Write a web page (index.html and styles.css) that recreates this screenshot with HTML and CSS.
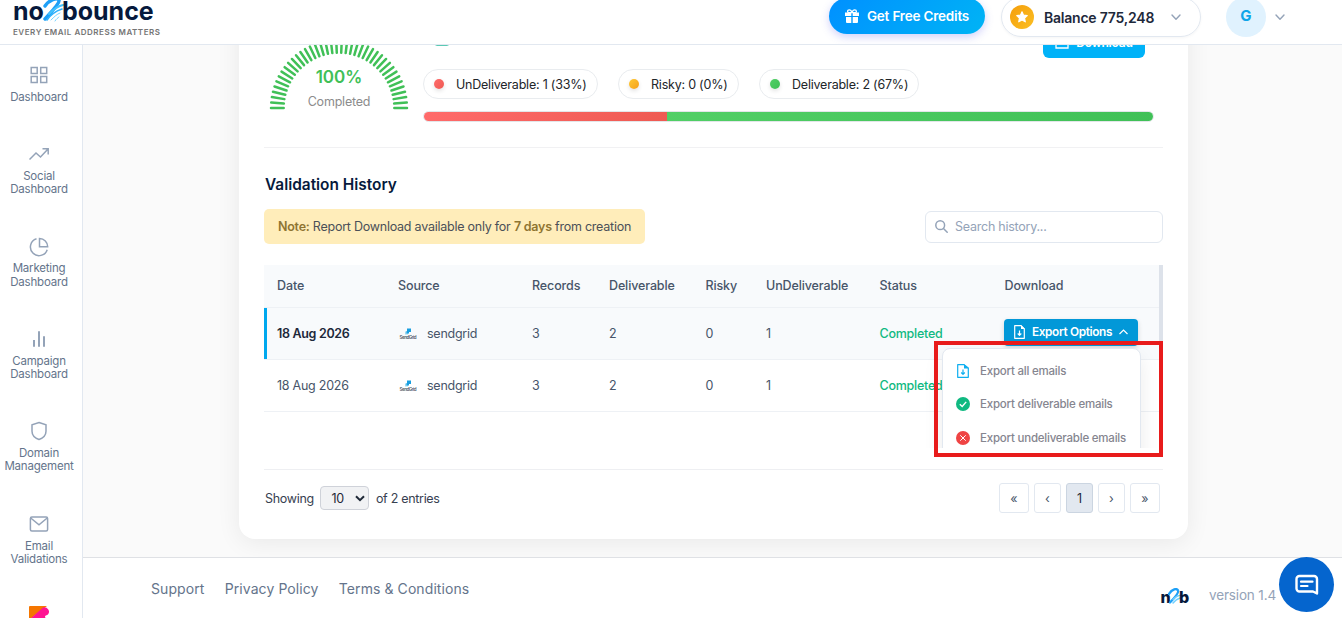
FILE: index.html
```html
<!DOCTYPE html>
<html lang="en">
<head>
    <meta charset="UTF-8">
    <meta name="viewport" content="width=device-width, initial-scale=1.0">
    <title>no2bounce - Validation History</title>
    <link rel="stylesheet" href="styles.css">
</head>
<body>

    <header class="topbar">
        <div class="topbar-inner">
            <div class="brand">
                <div class="logo">
                    <span>no</span>
                    <svg class="logo-two" width="24" height="26" viewBox="0 0 24 26" fill="none" stroke-linecap="round">
                        <path d="M4 9C8 3 16 0 18 3c1 3-6 10-14 19" stroke="#1ea0f7" stroke-width="3.4"/>
                        <path d="M8 17c4-4 8-8 14-9" stroke="#42c3ff" stroke-width="2"/>
                        <path d="M6 23c4-6 9-9 15-11" stroke="#2fb1fb" stroke-width="1.6"/>
                        <path d="M10 23c3-3 6-6 9-7M14 24c1-2 3-3 4-4" stroke="#7ad5ff" stroke-width="1"/>
                    </svg>
                    <span>bounce</span>
                </div>
                <div class="tagline">EVERY EMAIL ADDRESS MATTERS</div>
            </div>
            <div class="topbar-actions">
                <button class="credits-btn">
                    <svg width="14" height="14" viewBox="0 0 14 14" fill="#fff">
                        <path d="M0 3.6h6.3v3.4H0zM7.7 3.6H14v3.4H7.7zM1 8h5.3v6H2a1 1 0 0 1-1-1zM7.7 8H13v5a1 1 0 0 1-1 1H7.7z"/>
                        <path d="M7 3.6C6.4 1.6 5.4.8 4.3.8S2.6 1.6 2.6 2.4s.7 1.2 1.6 1.2zM7 3.6C7.6 1.6 8.6.8 9.7.8s1.7.8 1.7 1.6-.7 1.2-1.6 1.2z" fill="none" stroke="#fff" stroke-width="1.3"/>
                    </svg>
                    Get Free Credits
                </button>
                <div class="balance">
                    <span class="coin">
                        <svg width="14" height="14" viewBox="0 0 24 24" fill="#fff" stroke="#fff" stroke-width="2" stroke-linejoin="round"><path d="M12 3l2.7 5.8 6.3.8-4.6 4.4 1.2 6.3L12 17.2l-5.6 3.1 1.2-6.3L3 9.6l6.3-.8z"/></svg>
                    </span>
                    <span class="balance-text">Balance 775,248</span>
                    <svg width="10" height="7" viewBox="0 0 10 7" fill="none" stroke="#94a3b8" stroke-width="1.4" stroke-linecap="round" stroke-linejoin="round"><path d="M1 1l4 4.3L9 1"/></svg>
                </div>
                <div class="user">
                    <span class="avatar">G</span>
                    <svg width="10" height="7" viewBox="0 0 10 7" fill="none" stroke="#94a3b8" stroke-width="1.4" stroke-linecap="round" stroke-linejoin="round"><path d="M1 1l4 4.3L9 1"/></svg>
                </div>
            </div>
        </div>
    </header>

    <div class="layout">
        <nav class="sidebar">
            <a class="nav-item">
                <svg width="20" height="20" viewBox="0 0 20 20"><path d="M2.2 2.5h6v6h-6zM11.7 2.5h6v6h-6zM2.2 11.5h6v6h-6zM11.7 11.5h6v6h-6z"/></svg>
                <span>Dashboard</span>
            </a>
            <a class="nav-item">
                <svg width="20" height="20" viewBox="0 0 20 20"><path d="M.5 15.5l6.500-6.500 4.500 4 7.500-8M13.500 4.700h5.700v5.700"/></svg>
                <span>Social<br>Dashboard</span>
            </a>
            <a class="nav-item">
                <svg width="20" height="20" viewBox="0 0 20 20"><path d="M7.5 1.8A8.6 8.6 0 1 0 18.2 12.7M10.5 1.5v8.3h8.2a8.2 8.2 0 0 0-8.2-8.3z"/></svg>
                <span>Marketing<br>Dashboard</span>
            </a>
            <a class="nav-item">
                <svg width="20" height="20" viewBox="0 0 20 20"><path stroke-width="2" d="M5 11v6.8M10 2.2v15.6M15 7.2v10.6"/></svg>
                <span>Campaign<br>Dashboard</span>
            </a>
            <a class="nav-item">
                <svg width="20" height="20" viewBox="0 0 20 20"><path d="M10 1.5l7 2.3v6.400c0 4-3 6.800-7 8.300-4-1.500-7-4.300-7-8.300V3.800z"/></svg>
                <span>Domain<br>Management</span>
            </a>
            <a class="nav-item">
                <svg width="20" height="20" viewBox="0 0 20 20"><rect x="1.4" y="3" width="17.2" height="14" rx="1.5"/><path d="M1.7 4l8.3 6.8L18.200 4"/></svg>
                <span>Email<br>Validations</span>
            </a>
            <a class="nav-item">
                <svg class="filled" width="20" height="20" viewBox="0 0 20 20"><path fill="#f57600" d="M1 0h17L0 14V1a1 1 0 0 1 1-1z"/><path fill="#ff1493" d="M0 14L14 1.5a4.500 4.500 0 0 1 5 7L16 10l2 10H0z"/></svg>
            </a>
        </nav>

        <div class="main">
            <div class="content">
                <div class="card">

                    <section class="stats">
                        <div class="gauge">
                            <svg id="gauge" width="140" height="72" viewBox="0 0 140 72"></svg>
                            <div class="gauge-text">
                                <div class="gauge-value">100%</div>
                                <div class="gauge-label">Completed</div>
                            </div>
                        </div>
                        <div class="summary">
                            <div class="summary-top">
                                <svg width="14" height="14" viewBox="0 0 14 14" fill="none" stroke="#5cc9b4"><rect x=".5" y=".5" width="13" height="13" rx="1"/></svg>
                                <button class="download-btn">
                                    <svg width="14" height="14" viewBox="0 0 14 14" fill="none" stroke="#fff" stroke-width="1.3"><path d="M1 8v5h12V8M7 1v8M4 6l3 3 3-3"/></svg>
                                    Download
                                </button>
                            </div>
                            <div class="pills">
                                <span class="pill"><i class="dot red"></i>UnDeliverable: 1 (33%)</span>
                                <span class="pill"><i class="dot yellow"></i>Risky: 0 (0%)</span>
                                <span class="pill"><i class="dot green"></i>Deliverable: 2 (67%)</span>
                            </div>
                            <div class="bar">
                                <div class="bar-red" style="width: 33.33%"></div>
                                <div class="bar-green" style="width: 66.67%"></div>
                            </div>
                        </div>
                    </section>

                    <h2 class="title">Validation History</h2>

                    <div class="toolbar">
                        <div class="note"><b>Note:</b> Report Download available only for <b>7 days</b> from creation</div>
                        <div class="search">
                            <svg width="13" height="13" viewBox="0 0 13 13" fill="none" stroke="#94a3b8" stroke-width="1.5" stroke-linecap="round"><circle cx="5.2" cy="5.2" r="4.4"/><path d="M8.5 8.5l3.7 3.7"/></svg>
                            <span>Search history...</span>
                        </div>
                    </div>

                    <div class="table-wrap">
                        <table class="history">
                            <colgroup>
                                <col class="c-date"><col class="c-source"><col class="c-records"><col class="c-deliv">
                                <col class="c-risky"><col class="c-undeliv"><col class="c-status"><col class="c-download">
                            </colgroup>
                            <thead>
                                <tr>
                                    <th>Date</th><th>Source</th><th>Records</th><th>Deliverable</th>
                                    <th>Risky</th><th>UnDeliverable</th><th>Status</th><th>Download</th>
                                </tr>
                            </thead>
                            <tbody>
                                <tr class="active">
                                    <td>18 Aug 2026</td>
                                    <td>
                                        <div class="source">
                                            <svg width="20" height="14" viewBox="0 0 20 14"><path fill="#9dd9f3" d="M7 4.500h3V7.500H7z"/><path fill="#1a9fe0" d="M9 1.500h4v3.500h-2v1.500H8.500V4H9z"/><text x="1.5" y="12" textLength="17">SendGrid</text></svg>
                                            sendgrid
                                        </div>
                                    </td>
                                    <td>3</td><td>2</td><td>0</td><td>1</td>
                                    <td class="done">Completed</td>
                                    <td class="download-cell">
                                        <div class="export">
                                            <button class="export-btn">
                                                <svg width="11" height="14" viewBox="0 0 11 14" fill="none" stroke="#fff" stroke-width="1.2" stroke-linejoin="round"><path d="M.7.7H7L10.3 4v9.3H.7z"/><path fill="#fff" stroke="none" d="M7 0l4 4H7z"/><path d="M5.5 5.5v4.7M3.7 8.5l1.800 1.800 1.800-1.800"/></svg>
                                                Export Options
                                                <svg width="9" height="6" viewBox="0 0 9 6" fill="none" stroke="#fff" stroke-width="1.2"><path d="M.5 5l4-4 4 4"/></svg>
                                            </button>
                                            <div class="menu">
                                                <div class="menu-item">
                                                    <svg width="14" height="14" viewBox="0 0 14 14" fill="none" stroke="#0eaef0" stroke-width="1.2" stroke-linejoin="round"><path d="M1.7.7H8L12.3 4v9.3H1.7z"/><path fill="#0eaef0" stroke="none" d="M8 0l4.500 4.500H8z"/><path d="M7 5.5v4.7M5.2 8.5L7 10.300l1.800-1.800"/></svg>
                                                    Export all emails
                                                </div>
                                                <div class="menu-item">
                                                    <svg width="14" height="14" viewBox="0 0 14 14" fill="none"><circle cx="7" cy="7" r="7" fill="#10b981"/><path d="M3.8 7.2l2.4 2.3 4-4.6" stroke="#fff" stroke-width="1.4"/></svg>
                                                    Export deliverable emails
                                                </div>
                                                <div class="menu-item">
                                                    <svg width="14" height="14" viewBox="0 0 14 14" fill="none"><circle cx="7" cy="7" r="7" fill="#ef4444"/><path d="M4.3 4.3l5.4 5.4M9.7 4.3L4.3 9.7" stroke="#fff"/></svg>
                                                    Export undeliverable emails
                                                </div>
                                            </div>
                                        </div>
                                    </td>
                                </tr>
                                <tr>
                                    <td>18 Aug 2026</td>
                                    <td>
                                        <div class="source">
                                            <svg width="20" height="14" viewBox="0 0 20 14"><path fill="#9dd9f3" d="M7 4.500h3V7.500H7z"/><path fill="#1a9fe0" d="M9 1.500h4v3.500h-2v1.500H8.500V4H9z"/><text x="1.5" y="12" textLength="17">SendGrid</text></svg>
                                            sendgrid
                                        </div>
                                    </td>
                                    <td>3</td><td>2</td><td>0</td><td>1</td>
                                    <td class="done">Completed</td>
                                    <td></td>
                                </tr>
                            </tbody>
                        </table>
                        <div class="scrollbar"></div>
                    </div>

                    <div class="table-footer">
                        <div class="entries">
                            <span>Showing</span>
                            <span class="page-size">10
                                <svg width="10" height="7" viewBox="0 0 10 7" fill="none" stroke="#1f2937" stroke-width="2"><path d="M1 1.2l4 4 4-4"/></svg>
                            </span>
                            <span>of 2 entries</span>
                        </div>
                        <div class="pagination">
                            <button class="page wide">«</button>
                            <button class="page">‹</button>
                            <button class="page current">1</button>
                            <button class="page">›</button>
                            <button class="page wide">»</button>
                        </div>
                    </div>

                </div>
            </div>

            <footer class="footer">
                <div class="footer-links">
                    <a>Support</a>
                    <a>Privacy Policy</a>
                    <a>Terms &amp; Conditions</a>
                </div>
                <div class="footer-version">
                    <div class="mini-logo">
                        <span>n</span>
                        <svg width="13" height="17" viewBox="0 0 13 17" fill="none" stroke-linecap="round"><path d="M1 6C4 1 9 0 10 2.500c1 2-3 7-8 12" stroke="#1ea0f7" stroke-width="2.4"/><path d="M5 11.500c2-2 4-4 7-4M5 15c2-3 4-4 7-5" stroke="#6fd0ff" stroke-width="1.5"/></svg>
                        <span>b</span>
                    </div>
                    <span>version 1.4</span>
                </div>
            </footer>
        </div>
    </div>

    <div class="highlight-box"></div>

    <div class="chat">
        <svg width="24" height="22" viewBox="0 0 24 22" fill="none" stroke="#fff" stroke-linecap="round" stroke-linejoin="round"><path stroke-width="2.4" d="M4.5 2H19a3 3 0 0 1 3 3v14.500l-4-2H4.500a3 3 0 0 1-3-3V5a3 3 0 0 1 3-3z"/><path stroke-width="2.2" d="M6 7.7h11.500M6 12h6.500"/></svg>
    </div>

    <script>
        // Draw the gauge ticks over the half circle
        const gauge = document.getElementById('gauge');
        const ticks = 40;

        for (let i = 0; i < ticks; i++) {
            let angle = Math.PI - (Math.PI * i) / (ticks - 1);
            let line = document.createElementNS('http://www.w3.org/2000/svg', 'line');
            line.setAttribute('x1', 70 + 55.3 * Math.cos(angle));
            line.setAttribute('y1', 70 - 55.3 * Math.sin(angle));
            line.setAttribute('x2', 70 + 68 * Math.cos(angle));
            line.setAttribute('y2', 70 - 68 * Math.sin(angle));
            gauge.appendChild(line);
        }
    </script>

</body>
</html>
```
FILE: styles.css
```css
* {
    box-sizing: border-box;
}
body {
    margin: 0;
    height: 618px;
    display: flex;
    flex-direction: column;
    overflow: hidden;
    font-family: Inter, "Liberation Sans", sans-serif;
    font-size: 13px;
    color: #475569;
    background: #fff;
}
button {
    font-family: inherit;
    border: none;
    padding: 0;
}
svg {
    flex: none;
    display: block;
}

/* Top bar */
.topbar {
    flex: none;
    height: 45px;
    display: flex;
    align-items: flex-end;
    overflow: hidden;
    border-bottom: 1px solid #e2e8f0;
}
.topbar-inner {
    flex: 1;
    height: 54px;
    display: flex;
    align-items: center;
    justify-content: space-between;
    padding: 0 57px 0 13px;
}
.brand {
    padding-top: 2px;
}
.logo {
    display: flex;
    align-items: center;
    height: 26px;
    font-size: 25px;
    font-weight: 700;
    line-height: 26px;
    color: #06193c;
}
.logo-two {
    margin: -2px -3px 0 -3px;
}
.tagline {
    font-size: 8px;
    font-weight: 600;
    line-height: 11px;
    letter-spacing: 0.53px;
    margin-top: 3px;
    color: #757575;
    white-space: nowrap;
}
.topbar-actions {
    display: flex;
    align-items: center;
}
.credits-btn {
    display: flex;
    align-items: center;
    justify-content: center;
    gap: 8px;
    width: 156px;
    height: 36px;
    margin: 0 16px 2px 0;
    border-radius: 18px;
    background: linear-gradient(135deg, #0090ff, #00b4f5);
    box-shadow: 0 3px 8px rgba(99, 102, 241, 0.3);
    color: #fff;
    font-size: 13.5px;
    font-weight: 600;
    letter-spacing: -0.2px;
}
.balance {
    display: flex;
    align-items: center;
    width: 200px;
    height: 40px;
    padding-left: 8px;
    border: 1px solid #e2e8f0;
    border-radius: 20px;
    box-shadow: 0 1px 3px rgba(0, 0, 0, 0.04);
}
.coin {
    width: 24px;
    height: 24px;
    border-radius: 50%;
    background: linear-gradient(135deg, #f59e0b, #fbbf24);
    display: flex;
    align-items: center;
    justify-content: center;
}
.balance-text {
    width: 111px;
    margin: 0 16px 0 10px;
    font-size: 14px;
    font-weight: 600;
    letter-spacing: -0.22px;
    color: #1e293b;
    white-space: nowrap;
}
.user {
    display: flex;
    align-items: center;
    gap: 9px;
    margin-left: 25px;
}
.avatar {
    width: 40px;
    height: 40px;
    border-radius: 50%;
    background: #e0f2fe;
    color: #0ea5e9;
    font-size: 15px;
    font-weight: 700;
    line-height: 38px;
    text-align: center;
}

/* Sidebar */
.layout {
    flex: 1;
    min-height: 0;
    display: flex;
}
.sidebar {
    flex: none;
    width: 83px;
    padding: 20px 4px 0;
    display: flex;
    flex-direction: column;
    gap: 40.1px;
    overflow: hidden;
    border-right: 1px solid #e2e8f0;
}
.nav-item {
    flex: none;
    display: flex;
    flex-direction: column;
    align-items: center;
    gap: 5.9px;
    padding-right: 4px;
    font-size: 11.5px;
    line-height: 13.2px;
    letter-spacing: -0.2px;
    text-align: center;
    color: #64748b;
}
.nav-item svg {
    fill: none;
    stroke: #94a3b8;
    stroke-width: 1.5;
}
.nav-item .filled {
    stroke: none;
}

/* Main card */
.main {
    flex: 1;
    display: flex;
    flex-direction: column;
    min-width: 0;
}
.content {
    flex: 1;
    min-height: 0;
    display: flex;
    flex-direction: column;
    justify-content: flex-end;
    overflow: hidden;
    padding: 0 154px 18px 156px;
    background: #fafafa;
}
.card {
    flex: none;
    padding: 20px 25px 0;
    background: #fff;
    border-radius: 16px;
    box-shadow: 0 4px 24px rgba(0, 0, 0, 0.07);
}
.stats {
    display: flex;
    align-items: flex-end;
    gap: 14px;
    padding: 0 9px 25px 5px;
    border-bottom: 1px solid #f1f1f3;
}
.gauge {
    display: grid;
    width: 140px;
    margin-bottom: 12px;
}
.gauge svg, .gauge-text {
    grid-area: 1 / 1;
}
.gauge line {
    stroke: #40c057;
    stroke-width: 2.5;
    stroke-linecap: round;
}
.gauge-text {
    align-self: end;
    text-align: center;
}
.gauge-value {
    font-size: 17px;
    font-weight: 600;
    line-height: 20px;
    color: #40c057;
}
.gauge-label {
    font-size: 12.5px;
    line-height: 16px;
    letter-spacing: -0.2px;
    margin-top: 7px;
    color: #8c8c8c;
}
.summary {
    flex: 1;
}
.summary-top {
    display: flex;
    justify-content: space-between;
    align-items: flex-start;
    padding: 0 9px 0 12px;
}
.summary-top svg {
    margin-top: 6px;
}
.download-btn {
    display: flex;
    align-items: center;
    justify-content: center;
    gap: 7px;
    width: 102px;
    height: 32px;
    border-radius: 6px;
    background: #00b2f8;
    color: #fff;
    font-size: 12px;
    font-weight: 600;
    letter-spacing: -0.2px;
}
.download-btn svg {
    margin: 0;
}
.pills {
    display: flex;
    gap: 20.5px;
    margin: 11px 0 12px;
}
.pill {
    display: flex;
    align-items: center;
    height: 30px;
    padding: 0 10px 0 10px;
    border: 1px solid #e9ecef;
    border-radius: 15px;
    font-size: 12.5px;
    letter-spacing: -0.22px;
    color: #212529;
    white-space: nowrap;
}
.dot {
    width: 10px;
    height: 10px;
    margin-right: 12px;
    border-radius: 50%;
    box-shadow: 0 2px 4px rgba(0, 0, 0, 0.12);
}
.dot.red {
    background: linear-gradient(135deg, #ff6b6b, #ee5a52);
}
.dot.yellow {
    background: linear-gradient(135deg, #ffc933, #f59f1b);
}
.dot.green {
    background: linear-gradient(135deg, #51cf66, #40c057);
}
.bar {
    display: flex;
    height: 11px;
    border: 1px solid #e3e6e9;
    border-radius: 6px;
    overflow: hidden;
}
.bar-red {
    background: linear-gradient(135deg, #ff6b6b, #ee5a52);
}
.bar-green {
    background: linear-gradient(135deg, #51cf66, #40c057);
}

.title {
    margin: 26px 0 13px 1px;
    font-size: 15.4px;
    font-weight: 600;
    line-height: 22px;
    color: #06193c;
}
.toolbar {
    display: flex;
    align-items: center;
    justify-content: space-between;
    height: 35px;
    margin-bottom: 21px;
}
.note {
    width: 381px;
    padding-left: 14px;
    border-radius: 5px;
    background: #ffedba;
    font-size: 12.5px;
    line-height: 35px;
    letter-spacing: -0.24px;
    color: #4b5058;
    white-space: nowrap;
}
.note b {
    font-weight: 600;
    color: #8f7532;
}
.search {
    display: flex;
    align-items: center;
    gap: 7px;
    width: 238px;
    height: 32px;
    padding-left: 9px;
    border: 1px solid #e2e8f0;
    border-radius: 6px;
    color: #94a3b8;
    font-size: 12.5px;
    letter-spacing: -0.24px;
}

/* History table */
.table-wrap {
    display: flex;
    align-items: flex-start;
    height: 183px;
    margin-bottom: 21px;
    overflow: hidden;
}
.history {
    width: 895px;
    table-layout: fixed;
    border-collapse: separate;
    border-spacing: 0;
}
.c-date { width: 121px; }
.c-source { width: 134px; }
.c-records { width: 77px; }
.c-deliv { width: 96.5px; }
.c-risky { width: 60.5px; }
.c-undeliv { width: 113.5px; }
.c-status { width: 125px; }
.c-download { width: 167.5px; }
.history th, .history td {
    padding: 0 0 0 13px;
    text-align: left;
    font-size: 12.5px;
    letter-spacing: -0.25px;
    white-space: nowrap;
    border-bottom: 1px solid #eef1f5;
}
.history th {
    height: 43px;
    padding-bottom: 1px;
    font-weight: 500;
    letter-spacing: -0.12px;
    background: #f8fafc;
}
.history td {
    height: 52px;
}
.history .active td {
    background: #f8fafc;
}
.history .active td:first-child {
    font-weight: 600;
    letter-spacing: -0.32px;
    color: #1e293b;
    box-shadow: inset 3px 0 #00a8ee;
}
.history .done {
    font-weight: 500;
    color: #10b981;
}
.source {
    display: flex;
    align-items: center;
    gap: 9px;
}
.source text {
    font-size: 4.5px;
    font-weight: 600;
    letter-spacing: 0;
    fill: #4b5563;
}
.scrollbar {
    width: 4px;
    height: 183px;
    background: #dde2ea;
}
.export {
    position: relative;
    width: 134px;
    margin-bottom: 3px;
}
.history .download-cell {
    padding-left: 12.5px;
}
.export-btn {
    display: flex;
    align-items: center;
    justify-content: center;
    gap: 7px;
    width: 134px;
    height: 27px;
    border-radius: 4px;
    background: #0298d8;
    box-shadow: 0 2px 5px rgba(0, 0, 0, 0.15);
    color: #fff;
    font-size: 11.8px;
    font-weight: 600;
    letter-spacing: -0.34px;
}
.menu {
    position: absolute;
    top: 29px;
    right: -3px;
    width: 199px;
    height: 140px;
    padding: 5.7px 0 0 13px;
    border: 1px solid #e2e8f0;
    border-radius: 8px;
    background: #fff;
    box-shadow: 0 8px 20px rgba(0, 0, 0, 0.08);
}
.menu-item {
    display: flex;
    align-items: center;
    gap: 10px;
    height: 33.5px;
    font-size: 11.5px;
    font-weight: 500;
    letter-spacing: -0.22px;
    color: #85858f;
}

.table-footer {
    display: flex;
    align-items: flex-start;
    justify-content: space-between;
    height: 70px;
    padding: 13px 3px 0 1px;
    border-top: 1px solid #eeeff2;
}
.entries {
    display: flex;
    align-items: center;
    gap: 6.5px;
    height: 30px;
    font-size: 12.5px;
    letter-spacing: -0.3px;
    color: #374151;
}
.page-size {
    display: flex;
    align-items: center;
    gap: 11px;
    width: 49px;
    height: 24px;
    padding-left: 10px;
    border: 1px solid #cfd2d9;
    border-radius: 4px;
    background: #f1f2f4;
    color: #1f2937;
}
.pagination {
    display: flex;
    gap: 5px;
}
.page {
    width: 27px;
    height: 30px;
    border: 1px solid #e2e8f0;
    border-radius: 3px;
    background: #fff;
    font-size: 12.5px;
    color: #475569;
}
.page.wide {
    width: 30px;
}
.page.current {
    background: #e2e8f0;
    border-color: #cbd5e1;
    color: #1e293b;
}

/* Footer */
.footer {
    flex: none;
    display: flex;
    justify-content: space-between;
    height: 61px;
    padding: 0 66px 0 68px;
    border-top: 1px solid #dfe1e5;
    background: #fff;
    color: #64748b;
}
.footer-links {
    display: flex;
    gap: 20.3px;
    padding-top: 21px;
    font-size: 14px;
    line-height: 20px;
    letter-spacing: 0.08px;
}
.footer-version {
    display: flex;
    align-items: center;
    gap: 20px;
    height: 20px;
    margin-top: 27px;
    font-size: 13.5px;
    letter-spacing: -0.15px;
    color: #94a3b8;
}
.mini-logo {
    display: flex;
    align-items: center;
    padding-top: 5px;
    font-size: 16px;
    font-weight: 800;
    line-height: 17px;
    color: #06193c;
}
.mini-logo svg {
    margin: -3px -2px 0 -2.5px;
}

/* Floating pieces over the page */
.highlight-box {
    position: absolute;
    left: 934px;
    top: 341px;
    width: 229px;
    height: 116px;
    border: 4px solid #e81b1b;
}
.chat {
    position: absolute;
    right: 8px;
    bottom: 6px;
    width: 55px;
    height: 55px;
    border-radius: 50%;
    background: #0565ce;
    display: flex;
    align-items: center;
    justify-content: center;
}
```
